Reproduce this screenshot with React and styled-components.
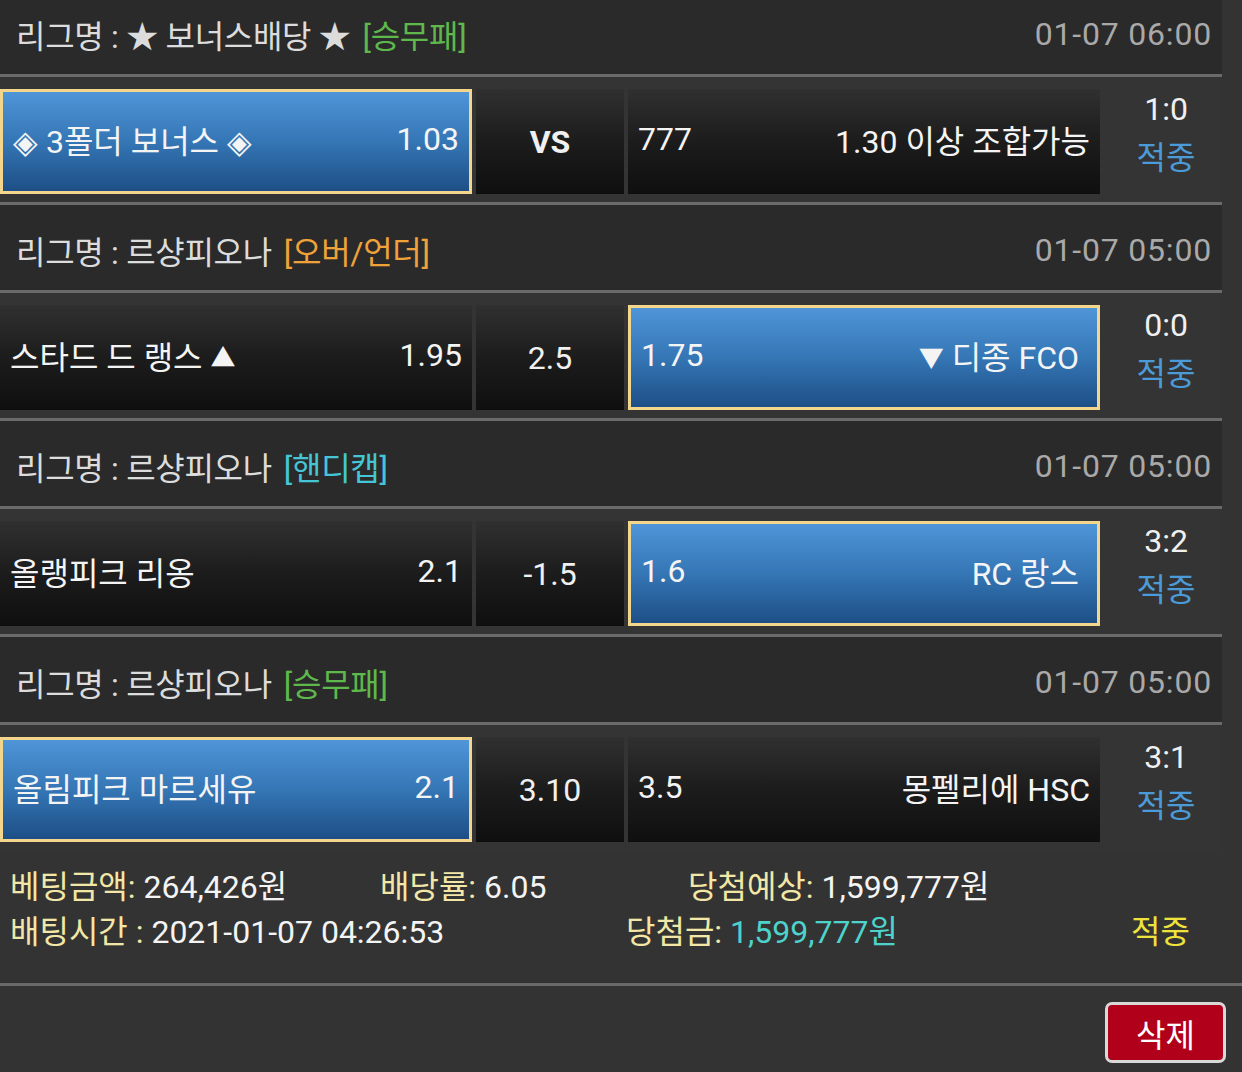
import styled, { createGlobalStyle } from "styled-components";

const GlobalStyle = createGlobalStyle`
  html, body {
    margin: 0;
    padding: 0;
    background: #333333;
  }
  body {
    font-family: "Roboto", "Noto Sans CJK KR", sans-serif;
    color: #f0f0f0;
    overflow: hidden;
  }
`;

const colors = {
  header: "#2a2a2a",
  line: "#6a6a6a",
  label: "#dcdcdc",
  time: "#a9a9a9",
  green: "#5fb84c",
  orange: "#f0a23a",
  cyan: "#45c6d6",
  hit: "#4b9bd8",
  cream: "#f2e7a6",
  money: "#4dd2cc",
  yellow: "#efe23c",
};

const darkCell = "linear-gradient(to bottom, #303030 0%, #1c1c1c 50%, #0f0f0f 100%)";
const blueCell = "linear-gradient(to bottom, #4f95d8 0%, #3576b5 50%, #1d4f86 100%)";

const Page = styled.div`
  width: 1242px;
  height: 1072px;
  overflow: hidden;
`;

// list is scrolled a little, so the first header is cut at the top
const List = styled.div`
  width: 1222px;
  margin-top: -11px;
`;

const LeagueHeader = styled.div`
  height: 88px;
  background: ${colors.header};
  display: flex;
  align-items: center;
  justify-content: space-between;
  padding: 4px 10px 0 16px;
  box-sizing: border-box;
  font-size: 32px;
  letter-spacing: 0.2px;
  border-bottom: 3px solid ${colors.line};
`;

const LeagueName = styled.div`
  color: ${colors.label};
  white-space: nowrap;
  letter-spacing: -0.3px;

  & > span {
    color: ${(p) => p.$tagColor};
    margin-left: 12px;
  }
`;

const Time = styled.div`
  color: ${colors.time};
  letter-spacing: 0.8px;
`;

const MatchRow = styled.div`
  display: grid;
  grid-template-columns: 472px 148px 472px 1fr;
  column-gap: 4px;
  padding: 12px 0 8px;
  border-bottom: ${(p) => (p.$last ? "none" : `3px solid ${colors.line}`)};
  background: #343434;
`;

const Pick = styled.div`
  height: 105px;
  box-sizing: border-box;
  display: flex;
  align-items: center;
  justify-content: space-between;
  padding: 0 10px 5px;
  padding-right: ${(p) => (p.$selected && p.$side === "away" ? "18px" : "10px")};
  font-size: 32px;
  color: #f4f4f4;
  white-space: nowrap;
  background: ${(p) => (p.$selected ? blueCell : darkCell)};
  border: ${(p) => (p.$selected ? "3px solid #f3d68c" : "none")};
`;

const Tri = styled.span`
  font-size: 25px;
  vertical-align: 2px;
`;

const Middle = styled.div`
  height: 105px;
  display: flex;
  align-items: center;
  justify-content: center;
  font-size: 32px;
  font-weight: ${(p) => (p.$bold ? 700 : 400)};
  background: ${darkCell};
`;

const Result = styled.div`
  height: 105px;
  display: flex;
  flex-direction: column;
  align-items: center;
  justify-content: center;
  gap: 9px;
  font-size: 32px;
  line-height: 40px;
  margin-top: -8px;
  padding-left: 6px;

  & > span {
    color: ${colors.hit};
  }
`;

const Summary = styled.div`
  padding: 17px 0 31px 10px;
  display: flex;
  flex-direction: column;
  gap: 5px;
  font-size: 32px;
  line-height: 40px;
  border-bottom: 3px solid ${colors.line};
`;

const SummaryLine = styled.div`
  display: grid;
  grid-template-columns: ${(p) => p.$cols};
  white-space: nowrap;
`;

const Label = styled.span`
  color: ${colors.cream};
`;

const Value = styled.span`
  color: ${(p) => p.$color || "#f4f4f4"};
`;

const Actions = styled.div`
  display: flex;
  justify-content: flex-end;
  padding: 16px 16px 0 0;
`;

const DeleteButton = styled.button`
  width: 121px;
  height: 61px;
  border: 3px solid #d9d9d9;
  border-radius: 7px;
  background: #b10019;
  color: #ffffff;
  font-family: "Roboto", "Noto Sans CJK KR", sans-serif;
  font-size: 32px;
  padding: 0;
`;

const bets = [
  {
    league: "★ 보너스배당 ★",
    tag: "[승무패]",
    tagColor: colors.green,
    time: "01-07 06:00",
    home: "◈ 3폴더 보너스 ◈",
    homeOdds: "1.03",
    mid: "VS",
    bold: true,
    awayOdds: "777",
    away: "1.30 이상 조합가능",
    pick: "home",
    score: "1:0",
  },
  {
    league: "르샹피오나",
    tag: "[오버/언더]",
    tagColor: colors.orange,
    time: "01-07 05:00",
    home: (
      <>
        스타드 드 랭스 <Tri>▲</Tri>
      </>
    ),
    homeOdds: "1.95",
    mid: "2.5",
    awayOdds: "1.75",
    away: (
      <>
        <Tri>▼</Tri> 디종 FCO
      </>
    ),
    pick: "away",
    score: "0:0",
  },
  {
    league: "르샹피오나",
    tag: "[핸디캡]",
    tagColor: colors.cyan,
    time: "01-07 05:00",
    home: "올랭피크 리옹",
    homeOdds: "2.1",
    mid: "-1.5",
    awayOdds: "1.6",
    away: "RC 랑스",
    pick: "away",
    score: "3:2",
  },
  {
    league: "르샹피오나",
    tag: "[승무패]",
    tagColor: colors.green,
    time: "01-07 05:00",
    home: "올림피크 마르세유",
    homeOdds: "2.1",
    mid: "3.10",
    awayOdds: "3.5",
    away: "몽펠리에 HSC",
    pick: "home",
    score: "3:1",
  },
];

function BetBlock({ bet, last }) {
  return (
    <>
      <LeagueHeader>
        <LeagueName $tagColor={bet.tagColor}>
          리그명 : {bet.league}
          <span>{bet.tag}</span>
        </LeagueName>
        <Time>{bet.time}</Time>
      </LeagueHeader>
      <MatchRow $last={last}>
        <Pick $selected={bet.pick === "home"} $side="home">
          <span>{bet.home}</span>
          <span>{bet.homeOdds}</span>
        </Pick>
        <Middle $bold={bet.bold}>{bet.mid}</Middle>
        <Pick $selected={bet.pick === "away"} $side="away">
          <span>{bet.awayOdds}</span>
          <span>{bet.away}</span>
        </Pick>
        <Result>
          {bet.score}
          <span>적중</span>
        </Result>
      </MatchRow>
    </>
  );
}

export default function App() {
  return (
    <Page>
      <GlobalStyle />
      <List>
        {bets.map((bet, i) => (
          <BetBlock key={i} bet={bet} last={i === bets.length - 1} />
        ))}
      </List>
      <Summary>
        <SummaryLine $cols="370px 308px 1fr">
          <div>
            <Label>베팅금액:</Label> <Value>264,426원</Value>
          </div>
          <div>
            <Label>배당률:</Label> <Value>6.05</Value>
          </div>
          <div>
            <Label>당첨예상:</Label> <Value>1,599,777원</Value>
          </div>
        </SummaryLine>
        <SummaryLine $cols="616px 505px 1fr">
          <div>
            <Label>배팅시간 :</Label> <Value>2021-01-07 04:26:53</Value>
          </div>
          <div>
            <Label>당첨금:</Label> <Value $color={colors.money}>1,599,777원</Value>
          </div>
          <div>
            <Value $color={colors.yellow}>적중</Value>
          </div>
        </SummaryLine>
      </Summary>
      <Actions>
        <DeleteButton>삭제</DeleteButton>
      </Actions>
    </Page>
  );
}
